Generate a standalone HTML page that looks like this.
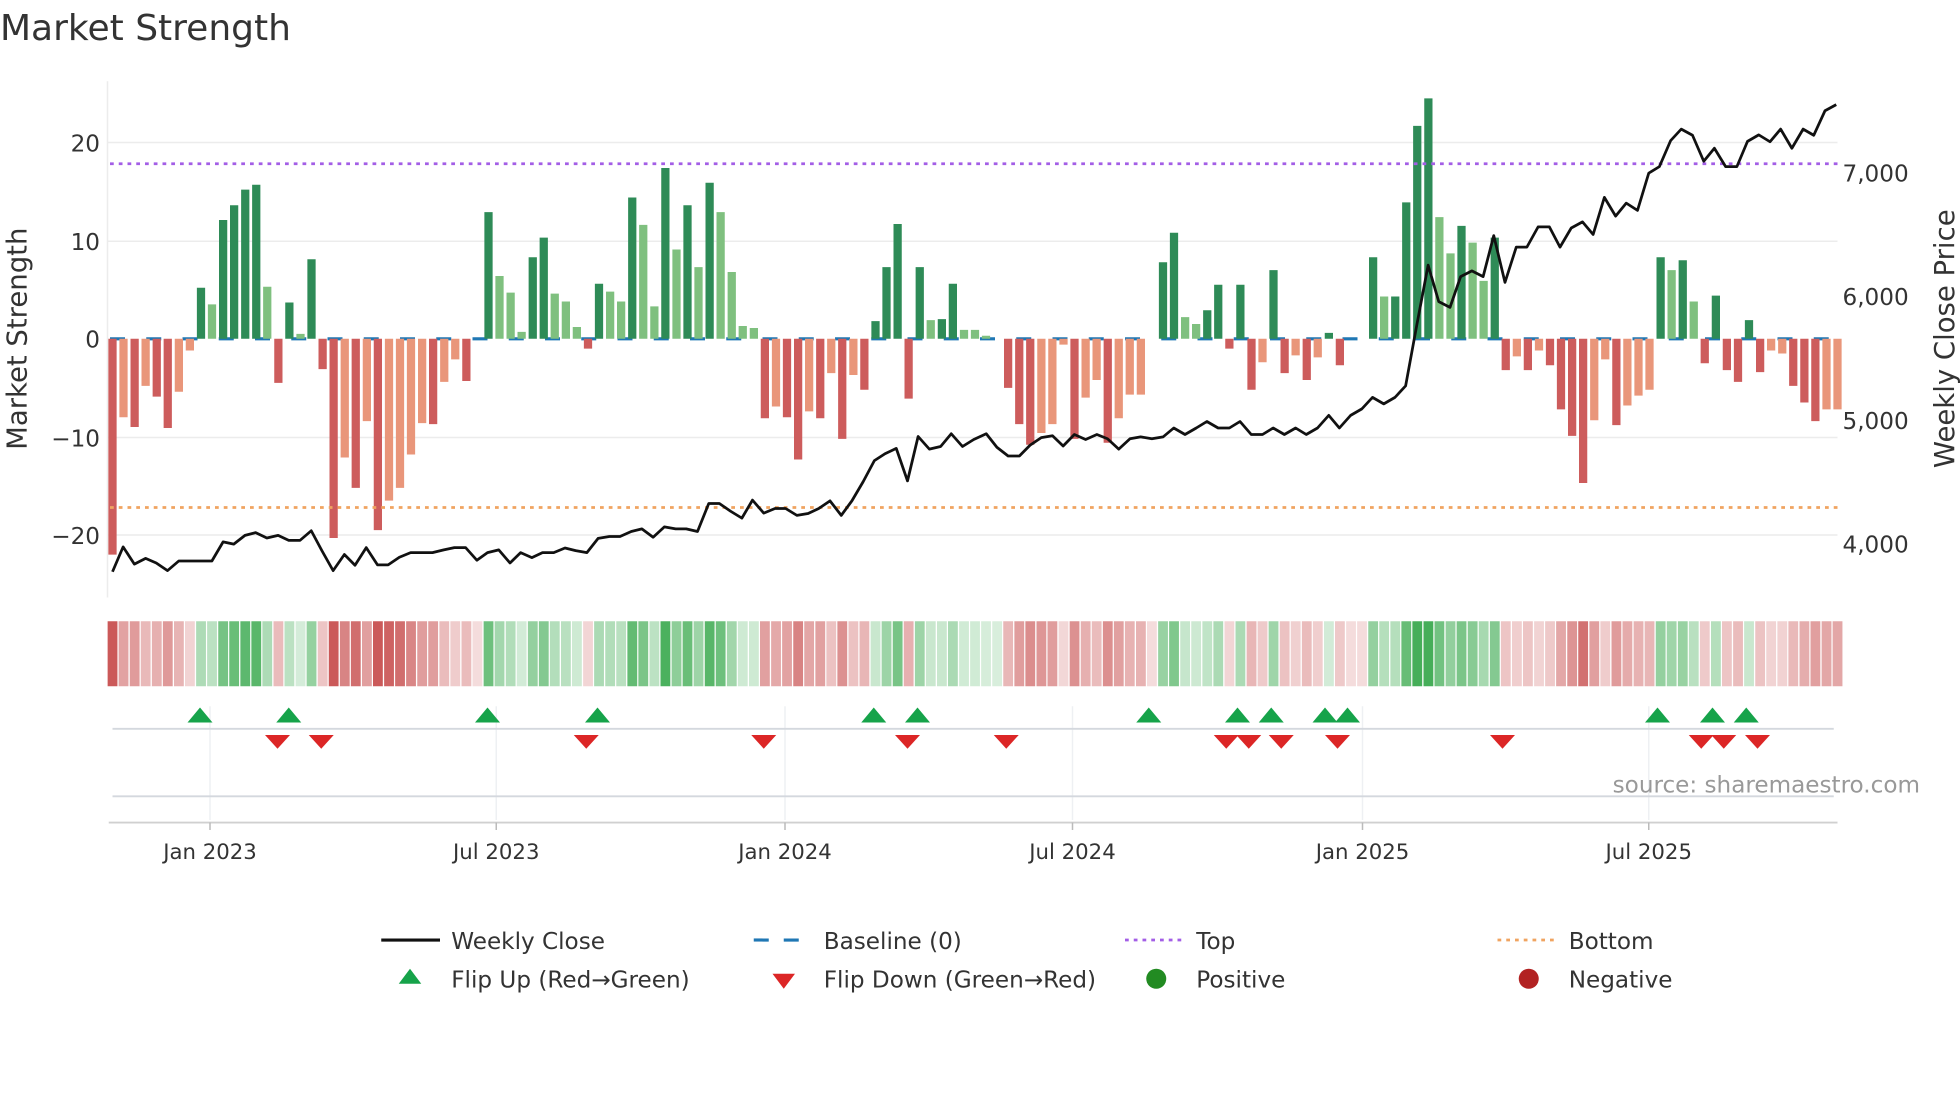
<!DOCTYPE html>
<html><head><meta charset="utf-8">
<style>
html,body{margin:0;padding:0;background:#fff;}
svg{display:block;font-family:"DejaVu Sans","Liberation Sans",sans-serif;}
</style></head>
<body>
<svg id="s" width="1960" height="1102" viewBox="0 0 1568 881.6" xmlns="http://www.w3.org/2000/svg">
<rect width="1568" height="882" fill="#fff"/>
<text x="0" y="32" font-size="28.8" fill="#333">Market Strength</text>
<g id="grid" stroke="#ececec" stroke-width="1.2">
<line x1="86" x2="1470" y1="114" y2="114"/><line x1="86" x2="1470" y1="193" y2="193"/>
<line x1="86" x2="1470" y1="350" y2="350"/><line x1="86" x2="1470" y1="428" y2="428"/>
<line x1="86" x2="86" y1="65" y2="478"/>
</g>
<line x1="88" x2="1470" y1="271" y2="271" stroke="#1f77b4" stroke-width="2.5" stroke-dasharray="12,17"/>
<g id="bars"></g>
<line x1="88" x2="1470" y1="131" y2="131" stroke="#a35ee6" stroke-width="2.2" stroke-dasharray="3,4"/>
<line x1="88" x2="1470" y1="406" y2="406" stroke="#f0a460" stroke-width="2.2" stroke-dasharray="3,4"/>
<polyline id="price" fill="none" stroke="#111" stroke-width="2.2" stroke-linejoin="round"/>
<g font-size="18.5" fill="#333" text-anchor="end">
<text x="80" y="121">20</text><text x="80" y="200">10</text><text x="80" y="278">0</text>
<text x="80" y="357">−10</text><text x="80" y="435">−20</text>
</g>
<g font-size="18.5" fill="#333">
<text x="1474" y="145">7,000</text><text x="1474" y="244">6,000</text><text x="1474" y="343">5,000</text><text x="1474" y="442">4,000</text>
</g>
<text transform="translate(21,271) rotate(-90)" text-anchor="middle" font-size="22" fill="#333">Market Strength</text>
<text transform="translate(1563,271) rotate(-90)" text-anchor="middle" font-size="22" fill="#333">Weekly Close Price</text>
<g id="strip"></g>
<g stroke="#eef0f3" stroke-width="1.2">
<line x1="168" x2="168" y1="565" y2="656"/><line x1="397" x2="397" y1="565" y2="656"/>
<line x1="628" x2="628" y1="565" y2="656"/><line x1="858" x2="858" y1="565" y2="656"/>
<line x1="1090" x2="1090" y1="565" y2="656"/><line x1="1319" x2="1319" y1="565" y2="656"/>
</g>
<line x1="90" x2="1467" y1="583" y2="583" stroke="#d4d8de" stroke-width="1.5"/>
<line x1="90" x2="1467" y1="637" y2="637" stroke="#d4d8de" stroke-width="1.5"/>
<line x1="87" x2="1470" y1="658" y2="658" stroke="#d0d0d0" stroke-width="1.5"/>
<g stroke="#bbb" stroke-width="1.2">
<line x1="168" x2="168" y1="658" y2="664"/><line x1="397" x2="397" y1="658" y2="664"/>
<line x1="628" x2="628" y1="658" y2="664"/><line x1="858" x2="858" y1="658" y2="664"/>
<line x1="1090" x2="1090" y1="658" y2="664"/><line x1="1319" x2="1319" y1="658" y2="664"/>
</g>
<g id="marks"></g>
<text x="1536" y="634" text-anchor="end" font-size="18.5" fill="#999">source: sharemaestro.com</text>
<g font-size="17" fill="#333" text-anchor="middle">
<text x="168" y="687">Jan 2023</text><text x="397" y="687">Jul 2023</text><text x="628" y="687">Jan 2024</text>
<text x="858" y="687">Jul 2024</text><text x="1090" y="687">Jan 2025</text><text x="1319" y="687">Jul 2025</text>
</g>
<g font-size="18.5" fill="#333">
<line x1="305" x2="352" y1="752" y2="752" stroke="#111" stroke-width="2.5"/>
<text x="361" y="759">Weekly Close</text>
<line x1="603" x2="650" y1="752" y2="752" stroke="#1f77b4" stroke-width="2.5" stroke-dasharray="12,12"/>
<text x="659" y="759">Baseline (0)</text>
<line x1="900" x2="947" y1="752" y2="752" stroke="#a35ee6" stroke-width="2.2" stroke-dasharray="3,4"/>
<text x="957" y="759">Top</text>
<line x1="1198" x2="1245" y1="752" y2="752" stroke="#f0a460" stroke-width="2.2" stroke-dasharray="3,4"/>
<text x="1255" y="759">Bottom</text>
<polygon points="328,775 319,787 337,787" fill="#16a34a"/>
<text x="361" y="790">Flip Up (Red→Green)</text>
<polygon points="618,779 636,779 627,791" fill="#dc2626"/>
<text x="659" y="790">Flip Down (Green→Red)</text>
<circle cx="925" cy="783" r="8" fill="#228b22"/>
<text x="957" y="790">Positive</text>
<circle cx="1223" cy="783" r="8" fill="#b22222"/>
<text x="1255" y="790">Negative</text>
</g>
</svg>
<script>
var NS="http://www.w3.org/2000/svg";
function el(t,a,p){var e=document.createElementNS(NS,t);for(var k in a)e.setAttribute(k,a[k]);p.appendChild(e);return e;}
var V=[[-22,1],[-8,0],[-9,1],[-4.8,0],[-5.9,1],[-9.1,1],[-5.4,0],[-1.2,0],[5.2,1],[3.5,0],[12.1,1],[13.6,1],[15.2,1],[15.7,1],[5.3,0],[-4.5,1],[3.7,1],[0.5,0],[8.1,1],[-3.1,1],
[-20.3,1],[-12.1,0],[-15.2,1],[-8.4,0],[-19.5,1],[-16.5,0],[-15.2,0],[-11.8,0],[-8.6,0],[-8.7,1],[-4.4,0],[-2.1,0],[-4.3,1],[0,0],[12.9,1],[6.4,0],[4.7,0],[0.7,0],[8.3,1],[10.3,1],
[4.6,0],[3.8,0],[1.2,0],[-1,1],[5.6,1],[4.8,0],[3.8,0],[14.4,1],[11.6,0],[3.3,0],[17.4,1],[9.1,0],[13.6,1],[7.3,0],[15.9,1],[12.9,0],[6.8,0],[1.3,0],[1.1,0],[-8.1,1],
[-6.9,0],[-8,1],[-12.3,1],[-7.4,0],[-8.1,1],[-3.5,0],[-10.2,1],[-3.7,0],[-5.2,1],[1.8,1],[7.3,1],[11.7,1],[-6.1,1],[7.3,1],[1.9,0],[2,1],[5.6,1],[0.9,0],[0.9,0],[0.3,0],
[0,0],[-5,1],[-8.7,1],[-10.8,1],[-9.6,0],[-8.7,0],[-0.6,0],[-10.2,1],[-6,0],[-4.2,0],[-10.6,1],[-8.1,0],[-5.7,0],[-5.7,0],[0,0],[7.8,1],[10.8,1],[2.2,0],[1.5,0],[2.9,1],
[5.5,1],[-1,1],[5.5,1],[-5.2,1],[-2.4,0],[7,1],[-3.5,1],[-1.7,0],[-4.2,1],[-1.9,0],[0.6,1],[-2.7,1],[0,0],[0,0],[8.3,1],[4.3,0],[4.3,1],[13.9,1],[21.7,1],[24.5,1],
[12.4,0],[8.7,0],[11.5,1],[9.8,0],[5.9,0],[10.3,1],[-3.2,1],[-1.8,0],[-3.2,1],[-1.2,0],[-2.7,1],[-7.2,1],[-9.9,1],[-14.7,1],[-8.3,0],[-2.1,0],[-8.8,1],[-6.8,0],[-5.8,0],[-5.2,0],
[8.3,1],[7,0],[8,1],[3.8,0],[-2.5,1],[4.4,1],[-3.2,1],[-4.4,1],[1.9,1],[-3.4,1],[-1.2,0],[-1.5,0],[-4.8,1],[-6.5,1],[-8.4,1],[-7.2,0],[-7.2,0]];
var bars=document.getElementById('bars'),strip=document.getElementById('strip');
var N=V.length,dx=(1470-90)/(N-1);
for(var i=0;i<N;i++){
 var x=90+dx*i,v=V[i][0],d=V[i][1];
 if(v!==0){var y0=271,y1=271-v*7.85;
  var c=v>0?(d?'#2e8b57':'#7fc07f'):(d?'#cd5c5c':'#e9967a');
  el('rect',{x:(x-3.3).toFixed(1),y:Math.min(y0,y1).toFixed(1),width:6.6,height:Math.abs(y1-y0).toFixed(1),fill:c},bars);}
 var s=Math.min(1,Math.abs(v)/18)*0.75+0.2, col;
 var pos = v>0 || (v===0 && i>0 && V[i-1][0]>0);
 if(pos){col='rgba(60,170,80,'+s.toFixed(2)+')';} else {col='rgba(200,80,80,'+s.toFixed(2)+')';}
 el('rect',{x:(x-4.4+0.5).toFixed(1),y:497,width:(dx-1).toFixed(2),height:52,fill:col},strip);
}
function Y(zy){return 271-(887-zy)*0.3066;}
var P1=[[180,1495],[197,1430],[215,1475],[233,1460],[250,1472],[268,1492],[286,1467],[303,1467],[321,1467],[339,1467],[357,1417],[374,1423],[392,1400],[409,1393],[427,1407],[445,1400],[462,1413],[480,1413],[498,1388],[515,1440],[533,1492],[551,1450],[568,1478],[586,1432],[604,1477],[621,1477],[639,1457],[657,1445],[675,1445],[692,1445],[710,1438],[727,1432],[745,1432],[763,1465],[780,1445],[798,1438],[816,1472],[833,1445],[851,1458],[868,1445],[886,1445],[904,1433],[921,1440],[939,1445],[957,1408],[975,1403],[992,1403],[1010,1390],[1027,1383],[1045,1405],[1063,1378],[1081,1383],[1098,1383],[1116,1390],[1134,1317],[1151,1317],[1169,1337],[1187,1355],[1204,1308],[1222,1342],[1240,1330],[1257,1330],[1275,1348],[1293,1343],[1310,1330],[1328,1310],[1346,1348],[1363,1310],[1381,1260],[1399,1205],[1416,1187],[1434,1173],[1452,1258],[1469,1142],[1487,1175],[1505,1168],[1522,1135],[1540,1168],[1558,1150]];
var P2=[[10,1135],[27,1170],[45,1193],[63,1193],[80,1165],[98,1145],[116,1140],[133,1167],[151,1137],[169,1150],[187,1137],[204,1148],[222,1175],[240,1148],[257,1143],[275,1148],[293,1143],[310,1120],[328,1137],[346,1120],[363,1103],[381,1120],[399,1120],[416,1103],[434,1137],[452,1137],[469,1120],[487,1137],[505,1120],[522,1137],[540,1120],[558,1087],[575,1120],[593,1087],[611,1070],[628,1040],[646,1057],[664,1040],[681,1010],[699,850],[717,695],[734,790],[752,805],[769,725],[787,710],[805,725],[822,618],[840,740],[858,648],[875,648],[893,595],[911,595],[928,648],[946,598],[964,582],[981,615],[999,518],[1017,567],[1034,533],[1052,552],[1070,455],[1087,438],[1105,370],[1122,340],[1140,356],[1158,424],[1175,390],[1193,438],[1211,438],[1228,372],[1246,355],[1264,373],[1281,340],[1299,390],[1317,340],[1334,356],[1352,292],[1370,276]];
var pts=[];P1.forEach(function(p){pts.push((p[0]/2).toFixed(1)+','+Y(p[1]).toFixed(1));});
P2.forEach(function(p){pts.push((784+p[0]/2).toFixed(1)+','+Y(p[1]).toFixed(1));});
document.getElementById('price').setAttribute('points',pts.join(' '));
var m=document.getElementById('marks');
[160,231,390,478,699,734,919,990,1017,1060,1078,1326,1370,1397].forEach(function(x){el('polygon',{points:x+',566 '+(x-10)+',578 '+(x+10)+',578',fill:'#16a34a'},m);});
[222,257,469,611,726,805,981,999,1025,1070,1202,1361,1379,1406].forEach(function(x){el('polygon',{points:(x-10)+',588 '+(x+10)+',588 '+x+',599',fill:'#dc2626'},m);});
</script>
</body></html>
